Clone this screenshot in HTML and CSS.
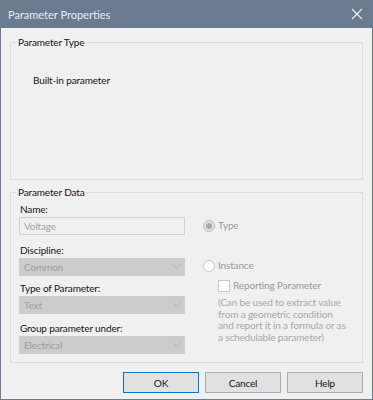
FILE: index.html
```html
<!DOCTYPE html>
<html>
<head>
<meta charset="utf-8">
<link rel="stylesheet" href="styles.css">
</head>
<body>
<div class="window">
  <div class="titlebar">
    <span class="title">Parameter Properties</span>
    <svg class="close" width="12" height="12" viewBox="0 0 12 12"><path d="M1 1 L11 11 M11 1 L1 11" stroke="#eef0f3" stroke-width="1.1" fill="none"/></svg>
  </div>
  <div class="body">
    <div class="group group-type">
      <div class="group-title">Parameter Type</div>
      <div class="builtin">Built-in parameter</div>
    </div>
    <div class="group group-data">
      <div class="group-title">Parameter Data</div>
      <div class="data-grid">
        <div class="fields">
          <div class="label">Name:</div>
          <div class="input">Voltage</div>
          <div class="label lbl-disc">Discipline:</div>
          <div class="select"><span>Common</span><svg width="9" height="6" viewBox="0 0 9 6"><path d="M0.5 0.5 L4.5 4.5 L8.5 0.5" stroke="#b4b4b4" fill="none"/></svg></div>
          <div class="label lbl-type">Type of Parameter:</div>
          <div class="select"><span>Text</span><svg width="9" height="6" viewBox="0 0 9 6"><path d="M0.5 0.5 L4.5 4.5 L8.5 0.5" stroke="#b4b4b4" fill="none"/></svg></div>
          <div class="label lbl-group">Group parameter under:</div>
          <div class="select"><span>Electrical</span><svg width="9" height="6" viewBox="0 0 9 6"><path d="M0.5 0.5 L4.5 4.5 L8.5 0.5" stroke="#b4b4b4" fill="none"/></svg></div>
        </div>
        <div class="options">
          <div class="radio-row row-type"><span class="radio checked"></span><span class="disabled-text">Type</span></div>
          <div class="radio-row row-instance"><span class="radio"></span><span class="disabled-text">Instance</span></div>
          <div class="check-row"><span class="checkbox"></span><span class="disabled-text">Reporting Parameter</span></div>
          <div class="note">(Can be used to extract value<br>from a geometric condition<br>and report it in a formula or as<br>a schedulable parameter)</div>
        </div>
      </div>
    </div>
    <div class="buttons">
      <div class="btn default">OK</div>
      <div class="btn">Cancel</div>
      <div class="btn">Help</div>
    </div>
  </div>
</div>
</body>
</html>
```

FILE: styles.css
```css
* { box-sizing: border-box; }
html, body { margin: 0; padding: 0; }
body {
  font-family: "Lato", "Noto Sans", sans-serif;
  font-size: 10px;
  letter-spacing: -0.15px;
  color: #141414;
  background: #ffffff;
}
.window {
  width: 373px;
  height: 400px;
  background: #6b7a8f;
  padding: 0 1px 1px 1px;
  display: flex;
  flex-direction: column;
}
.titlebar {
  height: 28px;
  margin: 0 -1px;
  display: flex;
  align-items: center;
  justify-content: space-between;
  padding: 0 10px 0 8px;
}
.title {
  color: #e9ecf0;
  font-size: 11px;
  letter-spacing: 0;
}
.close { display: block; }
.body {
  flex: 1;
  background: #f0f0f0;
  padding: 14px 9px 0 9px;
  display: flex;
  flex-direction: column;
}
.group {
  border: 1px solid #dcdcdc;
}
.group-title {
  display: table;
  margin: -8px 0 0 5px;
  padding: 0 2px;
  background: #f0f0f0;
  line-height: 15px;
}
.group-type {
  height: 138px;
}
.builtin {
  margin: 23px 0 0 22px;
  line-height: 15px;
}
.group-data {
  height: 171px;
  margin-top: 12px;
}
.data-grid {
  display: grid;
  grid-template-columns: 166px 1fr;
  column-gap: 18px;
  padding: 2px 0 0 8px;
}
.fields {
  display: flex;
  flex-direction: column;
}
.label {
  line-height: 15px;
  padding-left: 1px;
}
.lbl-disc { margin-top: 8px; }
.lbl-type { margin-top: 5px; }
.lbl-group { margin-top: 7px; }
.input {
  height: 18px;
  border: 1px solid #d2d2d2;
  background: #f0f0f0;
  color: #a3a3a3;
  line-height: 16px;
  padding-left: 4px;
}
.select {
  height: 18px;
  background: #cccccc;
  color: #9e9e9e;
  display: flex;
  align-items: center;
  justify-content: space-between;
  padding: 0 4px 0 5px;
  line-height: 16px;
}
.select svg { display: block; }
.options {
  display: flex;
  flex-direction: column;
}
.radio-row, .check-row {
  display: flex;
  align-items: center;
  line-height: 15px;
  height: 15px;
  white-space: nowrap;
}
.row-type { margin-top: 16px; }
.row-instance { margin-top: 25px; }
.check-row { margin-top: 5px; padding-left: 15px; }
.radio {
  width: 12px;
  height: 12px;
  border-radius: 50%;
  border: 1px solid #c8c8c8;
  background: #ffffff;
  margin-right: 3px;
  position: relative;
  flex: none;
}
.radio.checked {
  background: #e3e3e3;
  border-color: #bcbcbc;
}
.radio.checked::after {
  content: "";
  position: absolute;
  left: 2px;
  top: 2px;
  width: 6px;
  height: 6px;
  border-radius: 50%;
  background: #a8a8a8;
}
.checkbox {
  width: 12px;
  height: 12px;
  border: 1px solid #c8c8c8;
  background: #ffffff;
  margin-right: 3px;
  flex: none;
}
.disabled-text { color: #9a9a9a; }
.note {
  margin-top: 4px;
  padding-left: 15px;
  line-height: 11.6px;
  color: #a8a8a8;
  white-space: nowrap;
}
.buttons {
  display: flex;
  justify-content: flex-end;
  gap: 6px;
  margin-top: 9px;
}
.btn {
  width: 76px;
  height: 21px;
  border: 1px solid #adadad;
  background: #e1e1e1;
  display: flex;
  align-items: center;
  justify-content: center;
}
.btn.default {
  border-color: #0078d7;
}
```
